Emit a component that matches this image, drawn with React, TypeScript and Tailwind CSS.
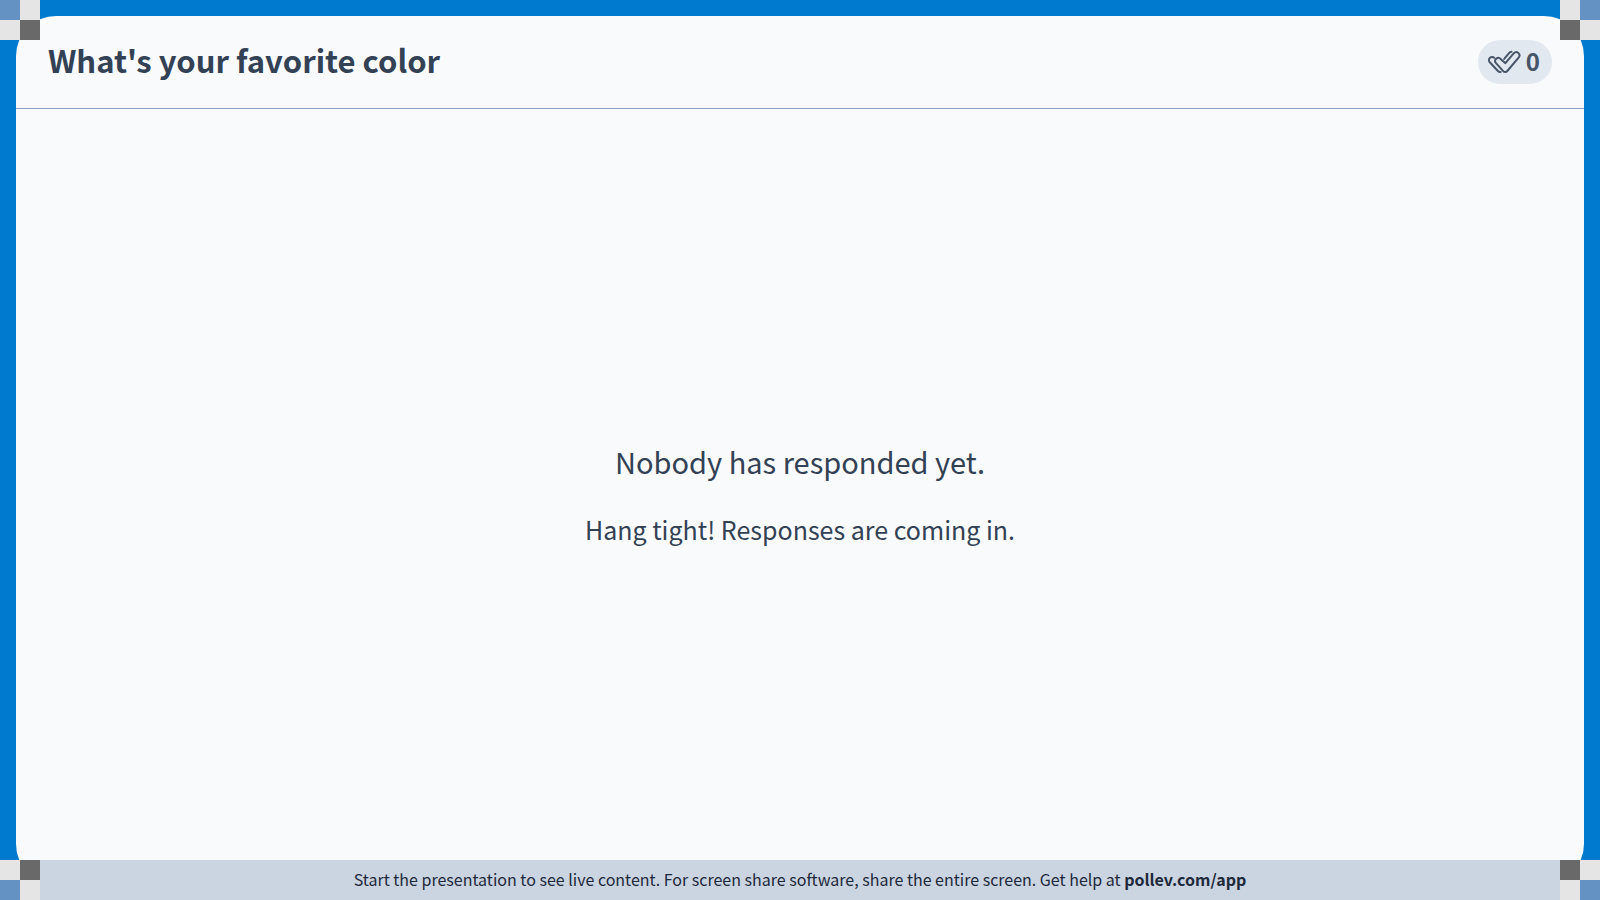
type Corner = "tl" | "tr" | "bl" | "br";

const cornerPlace: Record<Corner, string> = {
  tl: "left-0 top-0",
  tr: "right-0 top-0 -scale-x-100",
  bl: "left-0 bottom-0 -scale-y-100",
  br: "right-0 bottom-0 -scale-100",
};

function CornerMarker({ corner }: { corner: Corner }) {
  return (
    <div aria-hidden="true" className={`absolute grid size-10 grid-cols-2 ${cornerPlace[corner]}`}>
      <span className="bg-[#6493c3]" />
      <span className="bg-[#e5e5e5]" />
      <span className="bg-[#e5e5e5]" />
      <span className="bg-[#696969]" />
    </div>
  );
}

function DoubleCheckIcon() {
  return (
    <svg
      aria-hidden="true"
      viewBox="0 0 36 24"
      className="h-6 w-9"
      fill="none"
      stroke="currentColor"
      strokeWidth="2"
      strokeLinecap="round"
      strokeLinejoin="round"
    >
      <path d="M18.4 13.200 26.900 3.200a3.200 3.200 0 0 1 4.900 4.100L20.300 21a2.700 2.700 0 0 1-4.100.1L9 13.100a3.100 3.100 0 0 1 4.600-4.200Z" />
      <path d="M7.300 7.900a3.100 3.100 0 0 0-4.500 4.400l7.900 8.500c.9 1 1.900 1.300 2.900 1.200" />
      <path d="M17.200 8.900 22 3.200c.8-.9 1.500-1.300 2.500-1.400" />
    </svg>
  );
}

export default function App() {
  return (
    <div className="relative flex min-h-screen flex-col bg-[#007acf] font-['Noto_Sans_CJK_SC',sans-serif] text-[#334155]">
      <main className="m-4 flex flex-1 flex-col rounded-[40px] bg-[#f8fafc]">
        <header className="flex items-start justify-between border-b border-[#8da2c0] px-8 py-6">
          <h1 className="text-[31px] leading-10 font-bold">What's your favorite color</h1>
          <div className="flex h-11 items-center gap-[3px] rounded-full bg-[#e2e8f0] pr-3 pl-[9px] text-[#475569]">
            <DoubleCheckIcon />
            <span className="pb-0.5 text-2xl leading-8 font-bold">0</span>
          </div>
        </header>
        <section className="flex flex-1 flex-col items-center justify-center gap-[26px] pb-1.5 text-center">
          <p className="text-[29px] leading-[44px]">Nobody has responded yet.</p>
          <p className="text-[25px] leading-10">Hang tight! Responses are coming in.</p>
        </section>
      </main>
      <footer className="absolute inset-x-0 bottom-0 flex h-10 items-center justify-center bg-[#cbd5e1] pb-0.5 text-base leading-6 text-[#1e293b]">
        <p>
          Start the presentation to see live content. For screen share software, share the entire screen. Get help at{" "}
          <strong className="font-bold">pollev.com/app</strong>
        </p>
      </footer>
      <CornerMarker corner="tl" />
      <CornerMarker corner="tr" />
      <CornerMarker corner="bl" />
      <CornerMarker corner="br" />
    </div>
  );
}
